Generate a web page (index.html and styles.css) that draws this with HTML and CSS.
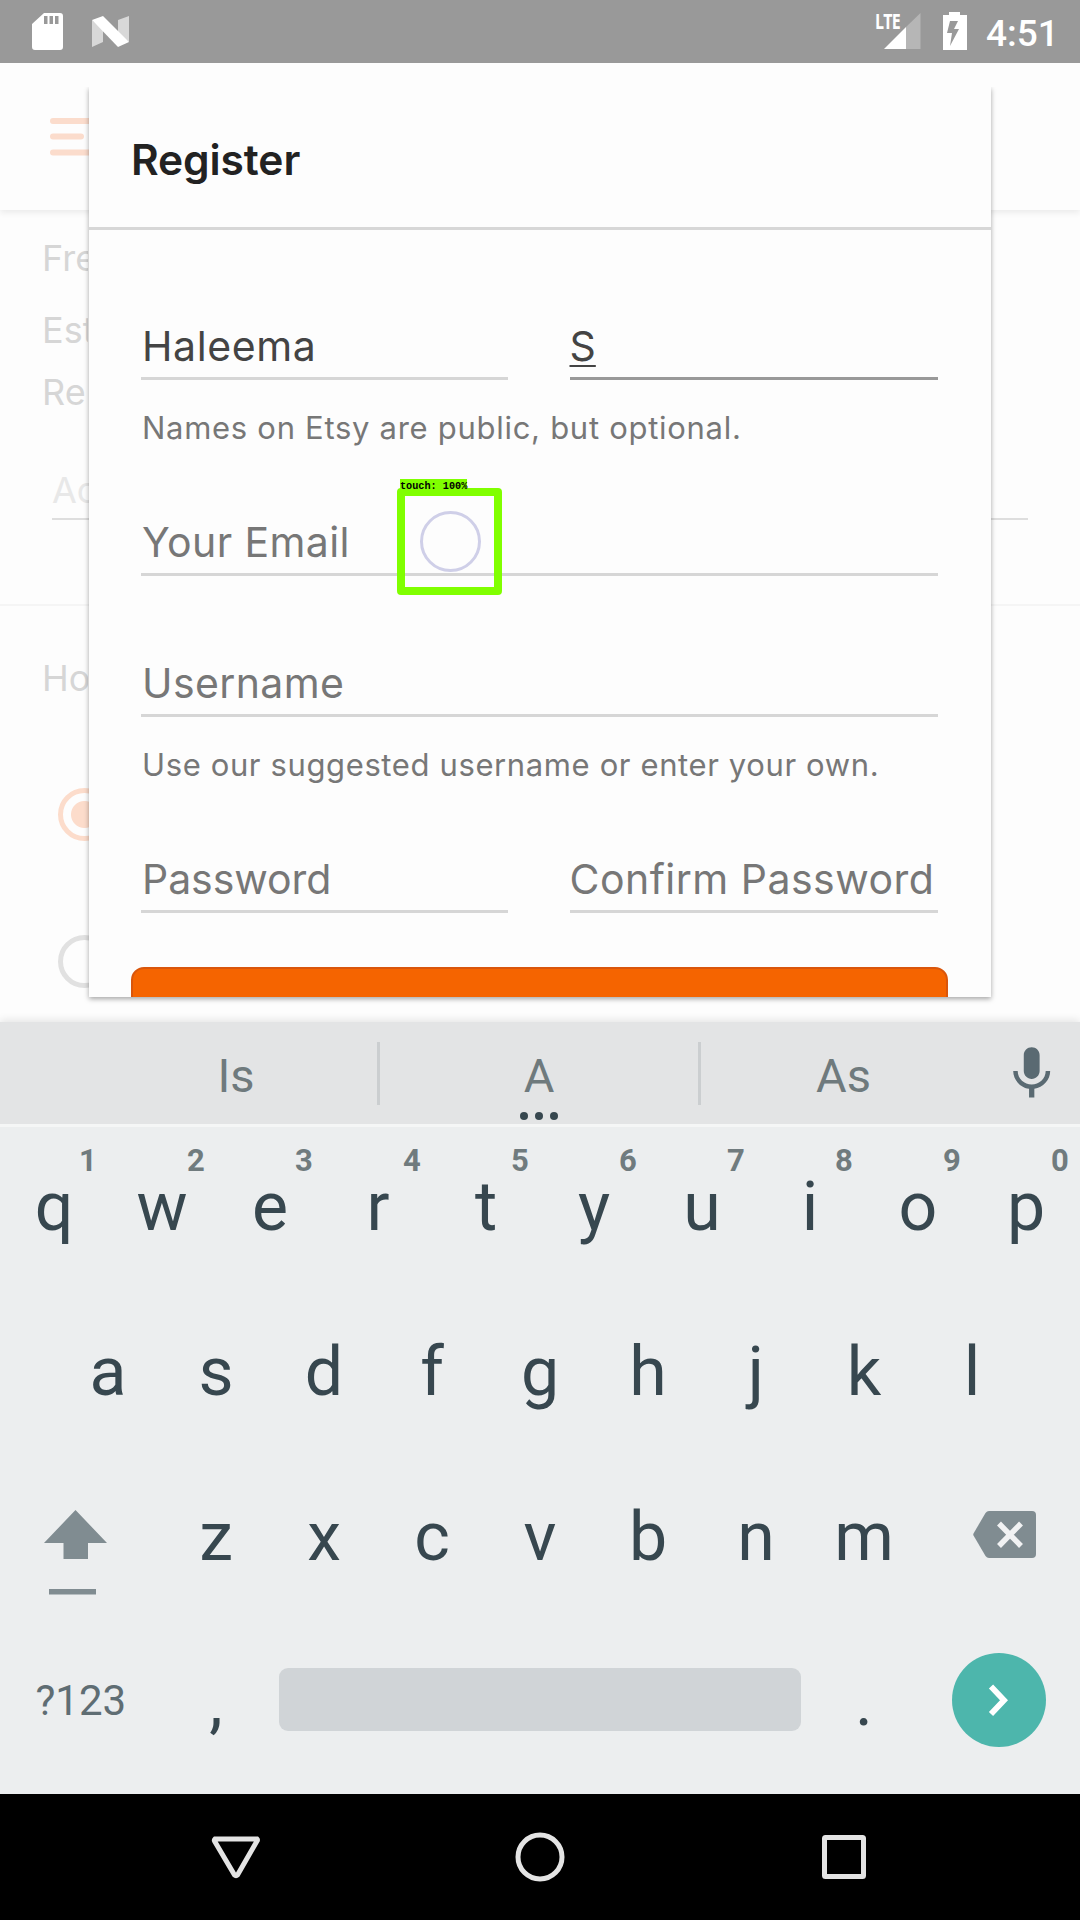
FILE: index.html
```html
<!DOCTYPE html>
<html lang="en">
<head>
<meta charset="utf-8">
<title>Register</title>
<link rel="stylesheet" href="styles.css">
</head>
<body>
<div class="screen">
  <header class="status">
    <svg class="status-left" width="140" height="63" viewBox="0 0 140 63">
      <path fill="#fff" fill-rule="evenodd" d="M44 13h16a3 3 0 0 1 3 3v31a3 3 0 0 1-3 3H35a3 3 0 0 1-3-3V24zM44 16v8h3.500v-8zM49.500 16v8h3.500v-8zM55 16v8h3.500v-8z"/>
      <path fill="#d8d8d8" d="M92 20l11 10v12l-11 5zM118 20l11-4v26l-11-8z"/>
      <path fill="#fff" d="M92 20l11-4 26 26-11 5z"/>
    </svg>
    <div class="status-right">
      <span class="lte">LTE</span>
      <svg width="98" height="63" viewBox="0 0 98 63">
        <path fill="#b6b6b6" d="M36 49V27L50.500 13v36z"/>
        <path fill="#fff" d="M14 49l22-22v22z"/>
        <path fill="#fff" fill-rule="evenodd" d="M79 12h11v3h7v35H73V15h6zM80 21l-3 12h5l-2 13 9-17h-5l4-8z"/>
      </svg>
      <span class="clock">4:51</span>
    </div>
  </header>

  <main class="stage">
    <section class="page">
      <div class="topbar">
        <svg width="60" height="38" viewBox="0 0 60 38">
          <path stroke="#fbdccc" stroke-width="6" stroke-linecap="round" d="M3 3h54M3 18.500h28M3 34.500h54"/>
        </svg>
      </div>
      <div class="terms">
        <p class="t1">Fre</p>
        <p class="t2">Est</p>
        <p class="t3">Re</p>
        <div class="address"><p class="note">Ac</p></div>
      </div>
      <div class="pay">
        <p class="how">Ho</p>
        <span class="radio on"></span>
        <span class="radio"></span>
      </div>
    </section>

    <section class="dialog">
      <h1 class="title">Register</h1>
      <form class="form">
        <div class="pair first">
          <div class="field filled"><span class="w-first">Haleema</span></div>
          <div class="field filled focus"><u>S</u></div>
        </div>
        <p class="hint"><span class="w-hint1">Names on Etsy are public, but optional.</span></p>
        <div class="field email"><span class="w-email">Your Email</span></div>
        <div class="field user"><span class="w-user">Username</span></div>
        <p class="hint"><span class="w-hint2">Use our suggested username or enter your own.</span></p>
        <div class="pair last">
          <div class="field"><span class="w-pass">Password</span></div>
          <div class="field"><span class="w-confirm">Confirm Password</span></div>
        </div>
        <div class="submit"></div>
      </form>
    </section>

    <div class="touch"><span class="touch-label">touch: 100%</span><span class="touch-ring"></span></div>
  </main>

  <section class="keyboard">
    <div class="suggest">
      <span class="word">Is</span>
      <span class="word main">A<svg class="more" width="40" height="10" viewBox="0 0 40 10"><g fill="#37474f"><circle cx="5" cy="5" r="4"/><circle cx="20" cy="5" r="4"/><circle cx="35" cy="5" r="4"/></g></svg></span>
      <span class="word">As</span>
      <svg class="mic" width="63.400" height="63.400" viewBox="0 0 24 24"><path fill="#5a6a72" d="M12 14c1.660 0 3-1.340 3-3V5c0-1.660-1.340-3-3-3S9 3.340 9 5v6c0 1.660 1.340 3 3 3zm5.300-3c0 3-2.540 5.100-5.300 5.100S6.700 14 6.700 11H5c0 3.410 2.720 6.230 6 6.720V21h2v-3.280c3.280-.48 6-3.300 6-6.720z"/></svg>
    </div>
    <div class="row">
      <span class="key"><sup>1</sup>q</span><span class="key"><sup>2</sup>w</span><span class="key"><sup>3</sup>e</span><span class="key"><sup>4</sup>r</span><span class="key"><sup>5</sup>t</span><span class="key"><sup>6</sup>y</span><span class="key"><sup>7</sup>u</span><span class="key"><sup>8</sup>i</span><span class="key"><sup>9</sup>o</span><span class="key"><sup>0</sup>p</span>
    </div>
    <div class="row">
      <span class="key">a</span><span class="key">s</span><span class="key">d</span><span class="key">f</span><span class="key">g</span><span class="key">h</span><span class="key">j</span><span class="key">k</span><span class="key">l</span>
    </div>
    <div class="row">
      <span class="key wide"><svg width="162" height="165" viewBox="0 0 162 165"><path fill="#808c91" d="M75.500 54L107 87H88v16H63.500V87H44zM49 133h47v5.500H49z"/></svg></span>
      <span class="key">z</span><span class="key">x</span><span class="key">c</span><span class="key">v</span><span class="key">b</span><span class="key">n</span><span class="key">m</span>
      <span class="key wide"><svg width="162" height="165" viewBox="0 0 162 165"><path fill="#808c91" d="M71 55h43a4 4 0 0 1 4 4v39a4 4 0 0 1-4 4H71q-2 0-3.500-2L55.500 79.500Q55 78.500 55.500 77.500L67.500 57q1.500-2 3.500-2z"/><path fill="none" stroke="#f1f2f3" stroke-width="5.500" d="M81 67.500l22 22.500M103 67.500l-22 22.500"/></svg></span>
    </div>
    <div class="row">
      <span class="key wide sym">?123</span><span class="key">,</span><span class="space"></span><span class="key dot">.</span>
      <span class="go"><svg width="94" height="94" viewBox="0 0 94 94"><path fill="none" stroke="#fff" stroke-width="5.800" d="M39 33.500L52 47.200 39 60.900"/></svg></span>
    </div>
  </section>

  <nav class="nav">
    <svg width="60" height="60" viewBox="0 0 60 60"><path d="M9 11.500h42q1 1 0 2L31.500 47.500q-1.500 1.500-3 0L8.500 13.500q-.5-1 .5-2z" transform="translate(0 .5)"/></svg>
    <svg width="60" height="60" viewBox="0 0 60 60"><circle cx="30" cy="30" r="22"/></svg>
    <svg width="60" height="60" viewBox="0 0 60 60"><rect x="10.500" y="10.500" width="39" height="39" rx="1"/></svg>
  </nav>
</div>
</body>
</html>
```
FILE: styles.css
```css
* { box-sizing: border-box; }
body { margin: 0; }
h1, p { margin: 0; font-weight: 400; }
svg { display: block; }

.screen {
  display: flex;
  flex-direction: column;
  width: 1080px;
  height: 1920px;
  overflow: hidden;
  background: #fdfdfd;
  font-family: Inter, "Liberation Sans", sans-serif;
}

.status {
  display: flex;
  justify-content: space-between;
  height: 63px;
  background: #999;
  color: #fff;
  font-family: Roboto, sans-serif;
}
.status-right { display: flex; padding-right: 26px; }
.lte {
  width: 25px;
  margin-right: -30px;
  padding-top: 9px;
  font: 700 21px/24px "Open Sans", sans-serif;
  letter-spacing: -1px;
  transform: scaleX(.76);
  transform-origin: left;
  white-space: nowrap;
}
.clock {
  width: 68px;
  margin-left: 18px;
  font-size: 37px;
  font-weight: 500;
  line-height: 67px;
  white-space: nowrap;
}

.stage {
  position: relative;
  height: 959px;
  overflow: hidden;
}

/* Faded page under the dialog */
.page { color: #d6d6d6; font-size: 36px; font-weight: 300; }
.topbar {
  height: 147px;
  padding: 55px 0 0 50px;
  box-shadow: 0 3px 6px rgba(0, 0, 0, .07);
}
.page p {
  width: 46px;
  overflow: hidden;
  line-height: 44px;
  white-space: nowrap;
}
.terms {
  height: 396px;
  padding: 26px 52px 0 42px;
  border-bottom: 2px solid #f5f5f5;
}
.t2 { margin-top: 28px; }
.t3 { margin-top: 18px; }
.address {
  height: 61px;
  margin: 45px 0 0 10px;
  padding-top: 9px;
  border-bottom: 2px solid #dedede;
  color: #e8e8e8;
}
.page .note { width: 37px; }
.pay { padding: 50px 0 0 42px; }
.radio {
  display: block;
  width: 53px;
  height: 53px;
  margin: 94px 0 0 15.500px;
  border: 5.500px solid #e1e1e1;
  border-radius: 50%;
}
.radio.on {
  margin-top: 88px;
  border-color: #fcdccb;
  background: radial-gradient(circle, #fcdccb 13px, transparent 14px);
}

.dialog {
  position: absolute;
  left: 88.500px;
  top: 24px;
  width: 902px;
  height: 910px;
  overflow: hidden;
  background: #fdfdfd;
  box-shadow: 0 2px 5px rgba(0, 0, 0, .35);
  clip-path: inset(0 -12px -12px -12px);
}
.title {
  height: 143px;
  padding: 48px 0 0 42.500px;
  border-bottom: 3px solid #d7d7d7;
  color: #222;
  font-size: 42.500px;
  font-weight: 600;
  line-height: 50px;
  letter-spacing: -.1px;
}
.form { padding: 91px 53px 0 52.500px; }
.pair { display: grid; grid-template-columns: 367px 368px; justify-content: space-between; }
.field {
  height: 59px;
  border-bottom: 3px solid #d6d6d6;
  color: #777;
  font-size: 41px;
  line-height: 50px;
  white-space: nowrap;
}
.filled { color: #444; }
.focus { border-color: #999; }
.focus u {
  text-decoration-thickness: 2px;
  text-underline-offset: 4px;
}
.hint {
  margin-top: 27px;
  padding-top: 1px;
  color: #777;
  font-size: 31px;
  line-height: 39px;
  white-space: nowrap;
}
.email { margin-top: 70px; }
.user { margin-top: 82px; }
.last { margin-top: 70px; }
.submit {
  height: 60px;
  margin: 54px -10px 0;
  border: 2px solid #d9560c;
  border-radius: 13px;
  background: #f56400;
}
.field span, .hint span { margin-left: 1px; }
.w-first { letter-spacing: .6px; }
.w-hint1 { letter-spacing: .71px; }
.w-hint2 { letter-spacing: .62px; }
.w-email, .w-user { letter-spacing: .4px; }
.w-pass { letter-spacing: -.05px; }
.field .w-confirm { margin-left: 0; letter-spacing: .48px; }

/* Touch marker */
.touch {
  position: absolute;
  left: 397px;
  top: 425px;
  width: 105px;
  height: 107px;
  border: 8px solid #80ff00;
  border-radius: 4px;
}
.touch-label {
  position: absolute;
  left: -5px;
  top: -17px;
  width: 67px;
  height: 12px;
  background: #80ff00;
  color: #000;
  font: 700 10.200px/15px "Liberation Mono", monospace;
  white-space: nowrap;
}
.touch-ring {
  position: absolute;
  left: 15px;
  top: 15px;
  width: 61px;
  height: 61px;
  border: 3px solid #cfcfe8;
  border-radius: 50%;
}

.keyboard {
  position: relative;
  height: 772px;
  background: #eceeef;
  color: #37474f;
  box-shadow: 0 -2px 8px rgba(0, 0, 0, .1);
  font-family: Roboto, sans-serif;
}
.suggest {
  display: grid;
  grid-template-columns: 285px 321px 285px 80px;
  padding-left: 95px;
  height: 105px;
  border-bottom: 3px solid #f5f6f6;
  background: #e3e4e5;
  color: #6f7a7d;
}
.word {
  display: flex;
  justify-content: center;
  height: 63px;
  margin-top: 20px;
  border-right: 3px solid #cbced0;
  font-size: 47px;
  line-height: 68px;
}
.word:nth-child(3) { border: 0; }
.main { position: relative; }
.more { position: absolute; left: 139px; bottom: -16px; }
.mic { margin: 20px 0 0 14px; }

.row {
  display: flex;
  justify-content: center;
  height: 165px;
}
.suggest + .row { height: 164px; }
.key {
  position: relative;
  width: 108px;
  padding-top: 40px;
  font-size: 68px;
  line-height: 80px;
  text-align: center;
}
.row:nth-child(n+3) .key { padding-top: 41px; }
.key sup {
  position: absolute;
  left: 78px;
  top: 14px;
  width: 20px;
  color: #707b7e;
  font-size: 31px;
  font-weight: 700;
  line-height: 40px;
}
.row .key.wide { width: 162px; padding-top: 0; }
.row .key.sym {
  padding: 40px 0 0;
  text-align: left;
  text-indent: 35.500px;
  color: #5f6d73;
  font-size: 42px;
}
.space {
  width: 522px;
  height: 63px;
  margin: 47px 9px 0;
  border-radius: 9px;
  background: #d0d4d7;
}
.go {
  width: 94px;
  height: 94px;
  margin: 32px 34px 0;
  border-radius: 50%;
  background: #4db6ac;
}

.nav {
  display: flex;
  justify-content: center;
  gap: 244px;
  height: 126px;
  padding-top: 33px;
  background: #000;
}
.nav svg { fill: none; stroke: #e4e4e4; stroke-width: 5; }
```
